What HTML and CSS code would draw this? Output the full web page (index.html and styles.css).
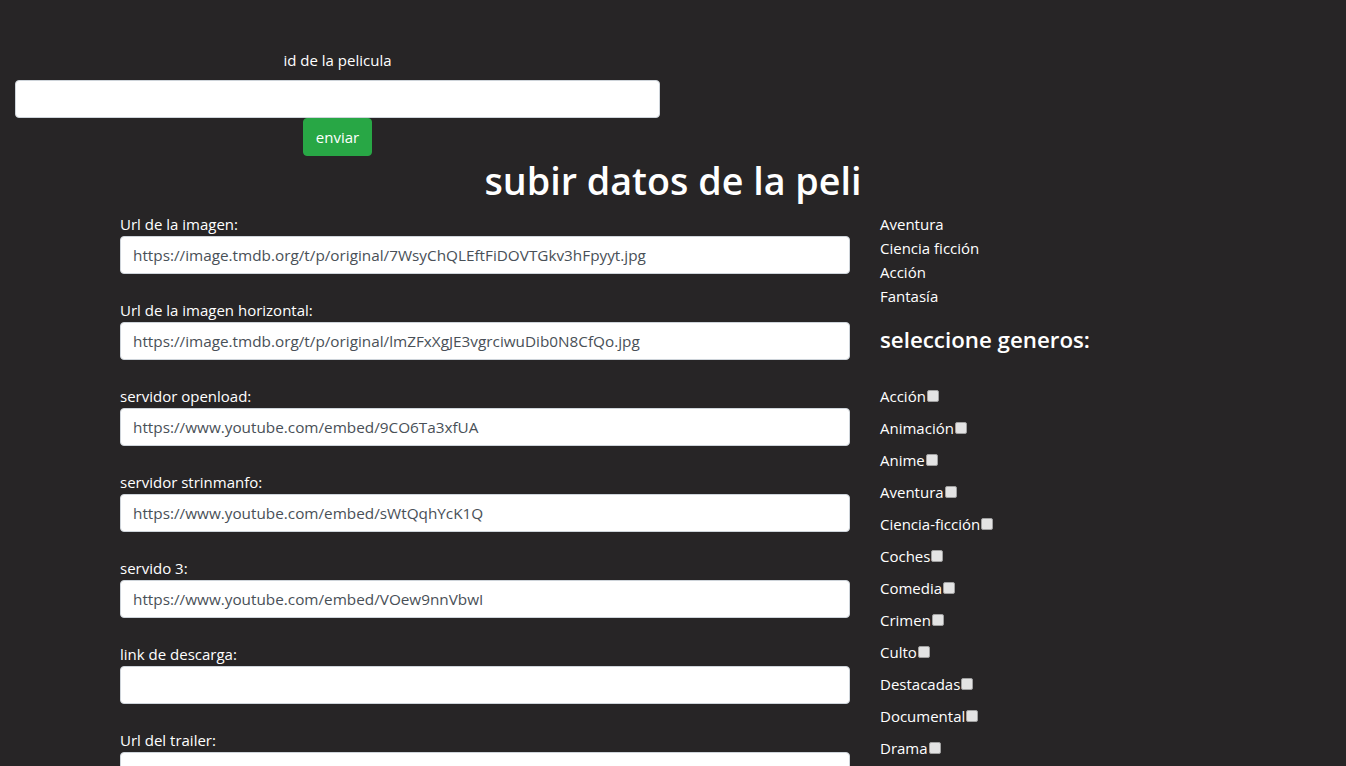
FILE: index.html
```html
<!DOCTYPE html>
<html lang="es">
<head>
<meta charset="utf-8">
<title>subir datos de la peli</title>
<link rel="stylesheet" href="styles.css">
</head>
<body>
<form class="id-form">
  <label class="id-label" for="idpeli">id de la pelicula</label>
  <input class="field" id="idpeli" type="text">
  <button class="btn-send" type="button">enviar</button>
</form>

<h1 class="title">subir datos de la peli</h1>

<div class="main">
  <div class="col-left">
    <div class="group">
      <label class="lbl">Url de la imagen:</label>
      <input class="field" type="text" value="https://image.tmdb.org/t/p/original/7WsyChQLEftFiDOVTGkv3hFpyyt.jpg">
    </div>
    <div class="group">
      <label class="lbl">Url de la imagen horizontal:</label>
      <input class="field" type="text" value="https://image.tmdb.org/t/p/original/lmZFxXgJE3vgrciwuDib0N8CfQo.jpg">
    </div>
    <div class="group">
      <label class="lbl">servidor openload:</label>
      <input class="field" type="text" value="https://www.youtube.com/embed/9CO6Ta3xfUA">
    </div>
    <div class="group">
      <label class="lbl">servidor strinmanfo:</label>
      <input class="field" type="text" value="https://www.youtube.com/embed/sWtQqhYcK1Q">
    </div>
    <div class="group">
      <label class="lbl">servido 3:</label>
      <input class="field" type="text" value="https://www.youtube.com/embed/VOew9nnVbwI">
    </div>
    <div class="group">
      <label class="lbl">link de descarga:</label>
      <input class="field" type="text">
    </div>
    <div class="group">
      <label class="lbl">Url del trailer:</label>
      <input class="field" type="text">
    </div>
  </div>
  <div class="col-right">
    <ul class="current">
      <li>Aventura</li>
      <li>Ciencia ficción</li>
      <li>Acción</li>
      <li>Fantasía</li>
    </ul>
    <h4 class="sub">seleccione generos:</h4>
    <div class="genres">
      <label class="genre">Acción<input type="checkbox" class="chk"></label>
      <label class="genre">Animación<input type="checkbox" class="chk"></label>
      <label class="genre">Anime<input type="checkbox" class="chk"></label>
      <label class="genre">Aventura<input type="checkbox" class="chk"></label>
      <label class="genre">Ciencia-ficción<input type="checkbox" class="chk"></label>
      <label class="genre">Coches<input type="checkbox" class="chk"></label>
      <label class="genre">Comedia<input type="checkbox" class="chk"></label>
      <label class="genre">Crimen<input type="checkbox" class="chk"></label>
      <label class="genre">Culto<input type="checkbox" class="chk"></label>
      <label class="genre">Destacadas<input type="checkbox" class="chk"></label>
      <label class="genre">Documental<input type="checkbox" class="chk"></label>
      <label class="genre">Drama<input type="checkbox" class="chk"></label>
    </div>
  </div>
</div>
</body>
</html>
```

FILE: styles.css
```css
html, body {
  margin: 0;
  padding: 0;
}
body {
  background: #272526;
  color: #ffffff;
  font-family: "Open Sans", "Noto Sans", "Liberation Sans", sans-serif;
  font-size: 15px;
  line-height: 24px;
}
.id-form {
  width: 645px;
  padding: 48px 15px 0;
  display: flex;
  flex-direction: column;
  align-items: center;
}
.id-label {
  display: block;
  margin-bottom: 8px;
  height: 24px;
}
.field {
  box-sizing: border-box;
  display: block;
  width: 100%;
  height: 38px;
  margin: 0;
  padding: 6px 12px;
  font-family: inherit;
  font-size: 15.3px;
  color: #495057;
  background: #ffffff;
  border: 1px solid #ced4da;
  border-radius: 4px;
}
.btn-send {
  height: 38px;
  padding: 6px 12px;
  font-family: inherit;
  font-size: 15px;
  color: #ffffff;
  background: #28a745;
  border: 1px solid #28a745;
  border-radius: 4px;
}
.title {
  margin: 1px 0 7px;
  text-align: center;
  font-size: 37.7px;
  line-height: 48px;
  font-weight: 600;
}
.main {
  display: grid;
  grid-template-columns: 730px 380px;
  column-gap: 30px;
  margin-left: 120px;
}
.group {
  margin-bottom: 24px;
}
.lbl {
  display: block;
  height: 24px;
}
.current {
  list-style: none;
  margin: 0 0 17px;
  padding: 0;
}
.sub {
  margin: 0 0 30px;
  font-size: 22.3px;
  line-height: 29px;
  font-weight: 600;
}
.genres {
  display: flex;
  flex-direction: column;
  gap: 8px;
}
.genre {
  display: flex;
  align-items: flex-start;
  height: 24px;
}
.chk {
  appearance: none;
  -webkit-appearance: none;
  box-sizing: border-box;
  width: 12px;
  height: 12px;
  margin: 6px 0 0 1px;
  background: #e3e3e3;
  border: 1px solid #a0a0a0;
  border-radius: 2px;
}
```
